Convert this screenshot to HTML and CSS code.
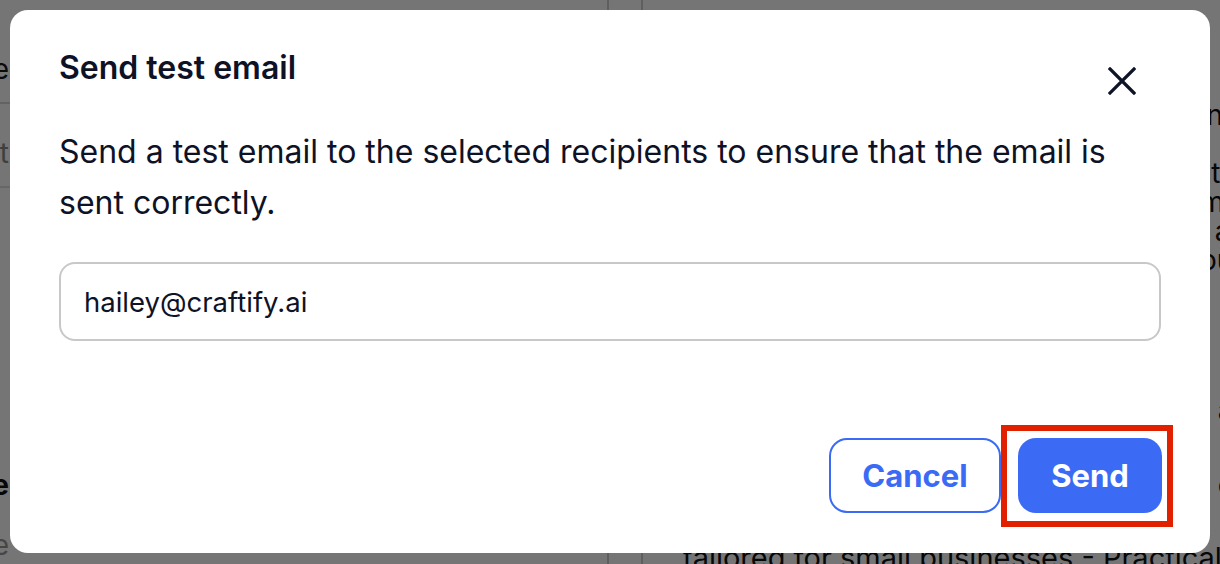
FILE: index.html
```html
<!DOCTYPE html>
<html lang="en">
<head>
<meta charset="utf-8">
<title>Send test email</title>
<link rel="stylesheet" href="styles.css">
</head>
<body>
<div class="page">
  <aside class="sidebar">
    <div class="side-row side-title"><span class="side-label">Template name</span></div>
    <div class="side-row side-sub"><span class="side-label">Content</span></div>
    <div class="side-spacer"></div>
    <div class="side-row side-bold"><span class="side-label">Schedule</span></div>
    <div class="side-row side-light"><span class="side-label">Create</span></div>
  </aside>
  <div class="rail"></div>
  <main class="content">
    <p class="para">Running a small business means wearing many hats, and we know how much every hour of your day counts. That is why we put together this guide for you and your whole team, full of practical ideas that you can use right away to grow your reach online and keep your loyal customers coming back.</p>
    <p class="para para-2">Discover our latest marketing resources and tools</p>
    <p class="para para-3">Our newest guide with simple steps you can follow</p>
    <p class="para para-4">tailored for small businesses - Practical tips</p>
  </main>
</div>

<div class="overlay"></div>

<div class="modal" role="dialog" aria-labelledby="modal-title">
  <div class="modal-header">
    <h2 class="modal-title" id="modal-title">Send test email</h2>
    <button class="close-btn" aria-label="Close">
      <svg viewBox="0 0 28 28" width="28" height="28" aria-hidden="true">
        <path d="M2 2 L26 26 M26 2 L2 26" stroke="#0f1326" stroke-width="3.2" stroke-linecap="square" fill="none"/>
      </svg>
    </button>
  </div>
  <p class="modal-desc">Send a test email to the selected recipients to ensure that the email is sent correctly.</p>
  <div class="field">hailey@craftify.ai</div>
  <div class="modal-footer">
    <button class="btn btn-outline">Cancel</button>
    <div class="highlight-wrap">
      <button class="btn btn-primary">Send</button>
      <span class="highlight"></span>
    </div>
  </div>
</div>
</body>
</html>
```

FILE: styles.css
```css
* { box-sizing: border-box; }

html, body {
  margin: 0;
  padding: 0;
  width: 1220px;
  height: 564px;
  overflow: hidden;
}

body {
  font-family: Inter, "Noto Sans", "Liberation Sans", sans-serif;
  background: #ffffff;
  color: #111111;
}

/* underlying page */
.page {
  display: flex;
  height: 564px;
}

.sidebar {
  width: 607px;
  flex-shrink: 0;
  display: flex;
  flex-direction: column;
}

.side-row {
  display: flex;
}

.side-label {
  width: 9px;
  display: flex;
  justify-content: flex-end;
  white-space: nowrap;
  font-size: 28px;
}

.side-title {
  height: 104px;
  padding-top: 52px;
  color: #1a1a1a;
  border-bottom: 2px solid #d8d8d8;
}

.side-sub {
  height: 84px;
  padding-top: 32px;
  color: #8a8a8a;
  border-bottom: 2px solid #e0e0e0;
}

.side-spacer { flex: 1; }

.side-bold {
  font-weight: 700;
  color: #111;
  margin-bottom: 26px;
}

.side-light {
  color: #9a9a9a;
  margin-bottom: 2px;
}

.rail {
  width: 36px;
  flex-shrink: 0;
  border-left: 2px solid #cfcfcf;
  border-right: 2px solid #cfcfcf;
  background: #ffffff;
}

.content {
  flex: 1;
  padding-left: 40px;
  padding-top: 101px;
  overflow: hidden;
}

.para {
  margin: 0;
  font-size: 28px;
  line-height: 29px;
  color: #111;
  width: 640px;
  text-align: justify;
  display: -webkit-box;
  -webkit-box-orient: vertical;
  -webkit-line-clamp: 7;
  overflow: hidden;
}

.para-2, .para-3, .para-4 {
  display: block;
  white-space: nowrap;
  width: 760px;
  text-align: left;
}

.para-2 { margin-top: 92px; }
.para-3 { margin-top: 46px; }
.para-4 { margin-top: 43px; font-size: 29px; }

.overlay {
  position: fixed;
  inset: 0;
  background: rgba(0, 0, 0, 0.54);
}

/* modal */
.modal {
  position: fixed;
  left: 10px;
  top: 10px;
  width: 1200px;
  height: 543px;
  background: #ffffff;
  border-radius: 18px;
  padding: 38px 48px 40px 49px;
  display: flex;
  flex-direction: column;
}

.modal-header {
  display: flex;
  justify-content: space-between;
  align-items: flex-start;
  height: 46px;
}

.modal-title {
  margin: 0;
  font-size: 32px;
  line-height: 40px;
  font-weight: 600;
  color: #0e1226;
}

.close-btn {
  margin-top: 19px;
  margin-right: 26px;
  width: 28px;
  height: 28px;
  padding: 0;
  border: none;
  background: transparent;
  display: flex;
}

.modal-desc {
  margin: 32px 0 0 0;
  font-size: 32px;
  line-height: 51px;
  color: #0e1226;
  font-weight: 400;
}

.field {
  margin-top: 34px;
  height: 79px;
  border: 2px solid #c8c8c8;
  border-radius: 16px;
  padding: 0 23px;
  display: flex;
  align-items: center;
  font-size: 27.5px;
  color: #0e1226;
  margin-right: 1px;
}

.modal-footer {
  margin-top: auto;
  display: flex;
  justify-content: flex-end;
  align-items: center;
  gap: 17px;
}

.btn {
  height: 75px;
  border-radius: 18px;
  font-family: Inter, "Noto Sans", "Liberation Sans", sans-serif;
  font-size: 31px;
  font-weight: 700;
  padding: 0;
  display: flex;
  align-items: center;
  justify-content: center;
}

.btn-outline {
  width: 172px;
  background: #ffffff;
  border: 2px solid #3b6bf5;
  color: #3b6bf5;
}

.btn-primary {
  width: 144px;
  background: #3b6bf5;
  border: none;
  color: #ffffff;
}

.highlight-wrap {
  position: relative;
}

.highlight {
  position: absolute;
  left: -17px;
  top: -13px;
  width: 172px;
  height: 102px;
  border: 6px solid #e12000;
  pointer-events: none;
}
```
